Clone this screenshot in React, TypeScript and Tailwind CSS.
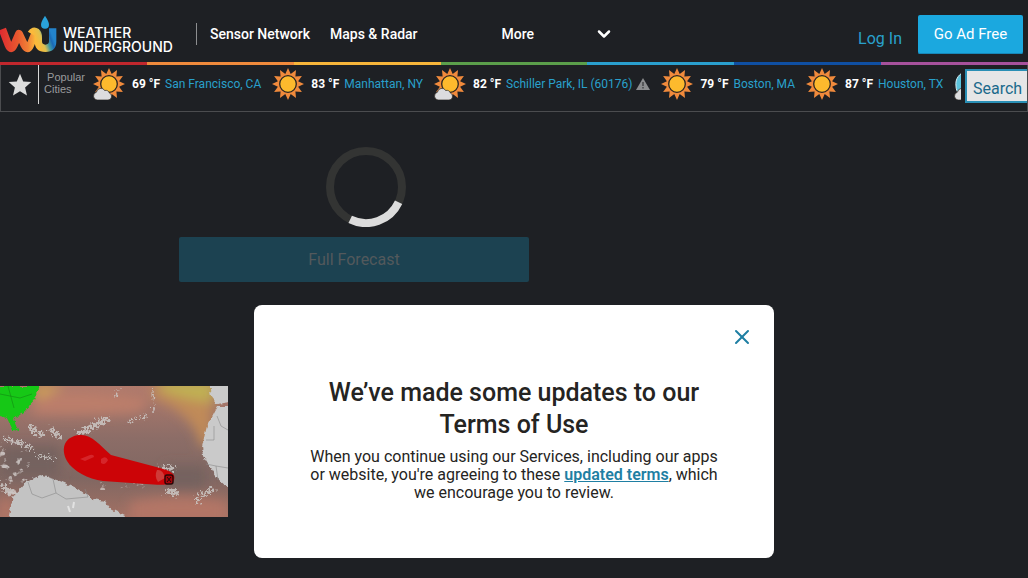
import { ChevronDown, X } from 'lucide-react'

type Sky = 'sunny' | 'partly' | 'night'

interface City {
  name: string
  temp?: number
  sky: Sky
  alert?: boolean
}

const CITIES: City[] = [
  { name: 'San Francisco, CA', temp: 69, sky: 'partly' },
  { name: 'Manhattan, NY', temp: 83, sky: 'sunny' },
  { name: 'Schiller Park, IL (60176)', temp: 82, sky: 'partly', alert: true },
  { name: 'Boston, MA', temp: 79, sky: 'sunny' },
  { name: 'Houston, TX', temp: 87, sky: 'sunny' },
]

const STRIPES = [
  'bg-[#c1272d]',
  'bg-[#f08a3c]',
  'bg-[#f7b53a]',
  'bg-[#5b9f4b]',
  'bg-[#2a9fce]',
  'bg-[#0f4fa3]',
  'bg-[#a6519c]',
]

// 12 rays around the centre of a 32x32 box
const RAYS = Array.from({ length: 24 }, (_, i) => {
  const angle = (i * Math.PI) / 12 - Math.PI / 2
  const radius = i % 2 === 0 ? 16 : 10.5
  return `${(16 + radius * Math.cos(angle)).toFixed(1)},${(16 + radius * Math.sin(angle)).toFixed(1)}`
}).join(' ')

function SkyIcon({ sky }: { sky: Sky }) {
  return (
    <svg viewBox="0 0 32 32" className="w-8 h-8 flex-shrink-0" aria-hidden="true">
      {sky === 'night' ? (
        <path d="M13 3C5 5 1 11 2 18c0 6 4 10 9 12z" fill="#5cc3dc" stroke="#d8eef4" strokeWidth="1" />
      ) : (
        <>
          <polygon points={RAYS} fill="#f08a3c" />
          <circle cx="16" cy="16" r="8.3" fill="#fdba2d" stroke="#2c2620" strokeWidth="1.3" />
        </>
      )}
      {sky !== 'sunny' && (
        <path
          d="M4 32a4 4 0 0 1-.6-7.8 4.6 4.6 0 0 1 8.4-1.7 3.6 3.6 0 0 1 4.6 2.6A3.6 3.6 0 0 1 15 32z"
          fill="#dcdcde"
          stroke="#2c2620"
          strokeWidth="0.7"
        />
      )}
    </svg>
  )
}

function Logo() {
  return (
    <a href="#" aria-label="Weather Underground" className="flex items-end gap-[5px] text-white">
      <svg viewBox="0 42 174 117" className="w-[58px] h-[39px]" aria-hidden="true">
        <defs>
          <linearGradient id="w" gradientUnits="userSpaceOnUse" x1="0" y1="0" x2="105" y2="0">
            <stop offset="0" stopColor="#dd2a30" />
            <stop offset="0.5" stopColor="#e9582f" />
            <stop offset="0.8" stopColor="#f08036" />
            <stop offset="1" stopColor="#fbb43a" />
          </linearGradient>
          <linearGradient id="u" gradientUnits="userSpaceOnUse" x1="112" y1="130" x2="160" y2="112">
            <stop offset="0" stopColor="#fbb93a" />
            <stop offset="0.35" stopColor="#e0c04c" />
            <stop offset="0.62" stopColor="#3f9aa8" />
            <stop offset="0.85" stopColor="#1b69b5" />
            <stop offset="1" stopColor="#2383cc" />
          </linearGradient>
        </defs>
        <path
          d="M7 84 L25 132 Q33 152 42 132 L57 98 L73 132 Q83 152 91 132 L105 97"
          fill="none"
          stroke="url(#w)"
          strokeWidth="23"
          strokeLinejoin="round"
        />
        <path
          d="M93 98 Q100 86 110 93 Q115 97 115 108 V121 Q115 142 136 142 Q158 142 158 121 V82"
          fill="none"
          stroke="url(#u)"
          strokeWidth="22"
        />
        <path d="M135 44 Q147 62 147 71 A12 12 0 0 1 123 71 Q123 62 135 44z" fill="#2aa3dc" />
      </svg>
      <span className="text-sm leading-[14px] font-medium font-[Inter,sans-serif]">
        WEATHER
        <br />
        UNDERGROUND
      </span>
    </a>
  )
}

function Header() {
  return (
    <header className="flex items-center h-[62px] whitespace-nowrap">
      <div className="w-[196px] pt-1.5">
        <Logo />
      </div>
      <nav className="flex items-center text-sm font-medium text-white pt-1.5">
        <span className="w-px h-[22px] mr-[13px] bg-[#8d8e90]" />
        <a href="#" className="mr-5">Sensor Network</a>
        <a href="#" className="mr-[84px]">Maps &amp; Radar</a>
        <button className="flex items-center gap-[60px]">
          More
          <ChevronDown className="w-5 h-5" strokeWidth={3} />
        </button>
      </nav>
      <div className="flex items-center gap-4 ml-auto mr-[5px]">
        <a href="#" className="text-base text-[#29a0cc] pt-4">Log In</a>
        <button className="h-[39px] w-[105px] mt-1.5 rounded-[2px] bg-[#1ba8df] text-[15px] text-white shadow-[inset_0_-1px_0_#1787b8]">
          Go Ad Free
        </button>
      </div>
    </header>
  )
}

function CityBar() {
  return (
    <div className="flex h-[47px] border border-t-0 border-[#4b4c4f] overflow-hidden whitespace-nowrap">
      <button aria-label="Favorites" className="w-[38px] h-[39px] flex-shrink-0 flex items-center justify-center border-r border-[#d8d8d8]">
        <svg viewBox="0 0 24 24" className="w-6 h-6" fill="#dcdcdc" aria-hidden="true">
          <path d="M12 .8l3.2 7.6 8.1.7-6.2 5.4 1.9 8-7-4.3-7 4.3 1.9-8L.7 9.1l8.1-.7z" />
        </svg>
      </button>
      <p className="w-[54px] flex-shrink-0 pt-1.5 pl-[5px] text-[11px] leading-3 text-[#9a9b9d] font-['Liberation_Sans',Arial,sans-serif] whitespace-pre">
        {' Popular\nCities'}
      </p>
      <ul className="flex flex-1 min-w-0 h-[38px] items-center gap-[11px] overflow-hidden text-xs">
        {CITIES.map((city) => (
          <li key={city.name} className="flex items-center flex-shrink-0">
            <SkyIcon sky={city.sky} />
            <span className="ml-[7px] mr-[5px] font-bold text-white">{city.temp} °F</span>
            <a href="#" className="text-[#29a0cc]">{city.name}</a>
            {city.alert && (
              <svg viewBox="0 0 14 12" className="w-3.5 h-3 ml-1" aria-hidden="true">
                <path d="M7 0l7 12H0z" fill="#8b8c8e" />
                <path d="M7 4v4M7 9v1.5" stroke="#3a3b3e" strokeWidth="1.3" />
              </svg>
            )}
          </li>
        ))}
        <li className="flex-shrink-0">
          <SkyIcon sky="night" />
        </li>
      </ul>
      <div className="w-[66px] flex-shrink-0 pt-1 pl-1 overflow-hidden">
        <input
          type="search"
          aria-label="Search locations"
          placeholder="Search Locations"
          className="w-60 h-[34px] pt-1 px-1.5 border-2 border-[#2a8fb5] bg-[#e6e6e7] text-base text-[#1b6a8c] placeholder:text-[#1b6a8c]"
        />
      </div>
    </div>
  )
}

function StormMap() {
  return (
    <svg viewBox="0 0 228 131" className="w-[228px] h-[131px]" role="img" aria-label="Tropical storm forecast map">
      <defs>
        <linearGradient id="sea" x1="0" y1="0" x2="0" y2="1">
          <stop offset="0" stopColor="#b07a6c" />
          <stop offset="0.4" stopColor="#8c6d67" />
          <stop offset="0.7" stopColor="#806762" />
          <stop offset="1" stopColor="#a27063" />
        </linearGradient>
        <filter id="soft" x="-30%" y="-30%" width="160%" height="160%">
          <feGaussianBlur stdDeviation="6" />
        </filter>
        <filter id="clouds" x="0" y="0" width="100%" height="100%">
          <feTurbulence type="fractalNoise" baseFrequency="0.12 0.16" numOctaves="4" seed="4" />
          <feColorMatrix values="0 0 0 0 0.78  0 0 0 0 0.76  0 0 0 0 0.75  0 6 0 0 -3.6" />
        </filter>
        <filter id="rough" x="-10%" y="-10%" width="120%" height="120%">
          <feTurbulence type="fractalNoise" baseFrequency="0.2" numOctaves="3" result="n" />
          <feDisplacementMap in="SourceGraphic" in2="n" scale="5" xChannelSelector="R" yChannelSelector="G" />
        </filter>
        <filter id="wisps" x="-10%" y="-10%" width="120%" height="120%">
          <feTurbulence type="fractalNoise" baseFrequency="0.35" numOctaves="3" seed="9" result="n" />
          <feDisplacementMap in="SourceGraphic" in2="n" scale="14" xChannelSelector="R" yChannelSelector="G" />
        </filter>
        <clipPath id="frame">
          <path d="M0 0h228v131H0z" />
        </clipPath>
      </defs>
      <g clipPath="url(#frame)">
        <path d="M0 0h228v131H0z" fill="url(#sea)" />
        <g filter="url(#soft)">
          <path d="M40 8 Q90 2 150 12 L140 26 Q90 30 30 28z" fill="#bc7e6b" />
          <path d="M150 0h62v60h-12Q196 30 155 12z" fill="#c08a58" />
          <path d="M160 -6h54v22Q190 16 160 4z" fill="#c0b052" />
          <path d="M35 0h30L36 14z" fill="#d0a552" />
          <path d="M130 116q50-10 98 0v20h-98zM0 112h12v24H0z" fill="#b37666" />
          <path d="M0 60h60v30H0zM165 80h40v22h-40z" fill="#75625f" />
        </g>
        <svg x="0" y="54" width="30" height="60" opacity="0.7">
          <rect width="30" height="60" filter="url(#clouds)" />
        </svg>
        <svg x="100" y="90" width="50" height="14" opacity="0.6">
          <rect width="50" height="14" filter="url(#clouds)" />
        </svg>
        <g filter="url(#wisps)" fill="none" stroke="#cbc7c4" strokeLinecap="round" opacity="0.85">
          <path d="M31 42l10 6M51 44l8 5M2 100l10 8" strokeWidth="5" />
          <path d="M4 53l14 3 14 6M38 70l14 2" strokeWidth="2.5" />
          <path d="M80 47l14-7 12-7" strokeWidth="5" />
          <path d="M153 5l1 20M128 36l18-6M115 12l3-8" strokeWidth="1.5" />
          <path d="M162 83l10-1M168 105l8 2" strokeWidth="5" />
          <path d="M196 116l6-8 12-4" strokeWidth="3" />
        </g>
        <g filter="url(#rough)">
          <path d="M0 0h39l-5 14-10 12-10 7 4 12-5-1-6-12-7-2z" fill="#14c814" />
          <path d="M209 -3h22v19l-14 2-6-8zM217 21h14v84l-16-15-12-20-1-10 5-20z" fill="#cacaca" />
          <path d="M8 134l5-23 12-14 15-8 20 6 18 8 15 10 12 2 6 8 22 11z" fill="#c3c3c3" />
        </g>
        <g fill="none" strokeWidth="0.6">
          <path d="M0 8l20 4M8 0l6 22M20 12l12-4" stroke="#128a12" />
          <path
            d="M28 96l4 12 10 4M42 112l14-5 10 6 22-2M56 107l-3-14M88 111l-3-8M206 54h8v-14M217 30l4 10 7 4M206 78l10 2 2 14M216 80l12 2"
            stroke="#8a8a8a"
          />
          <path d="M68 120l2 6M74 116l-1 6" stroke="#e2e2e2" strokeWidth="2" />
        </g>
        <path
          d="M80 49C91 48 100 59 111 69L160 82C171 85 176 88 174 94C172 100 160 99 146 98L103 95C88 93 73 85 67 75C60 62 65 50 80 49z"
          fill="#cc0407"
        />
        <path d="M80 73l10-4q4-1 4 2l-9 4zM101 73q5-4 7 1q-3 6-7 3z" fill="#d6252a" />
        <path d="M157 84q6-1 8 8l-7 4q-4-6-1-12z" fill="#cf3a38" />
        <rect x="165" y="89" width="8" height="9" rx="2" fill="#a8040a" stroke="#2b0506" strokeWidth="1.4" />
        <path d="M167 91l4 5M171 91l-4 5" stroke="#2b0506" strokeWidth="1" />
      </g>
    </svg>
  )
}

function TermsDialog() {
  return (
    <div
      role="dialog"
      aria-labelledby="terms-title"
      className="fixed inset-x-0 bottom-5 mx-auto w-[520px] max-w-full px-12 pt-[72px] pb-14 rounded-lg bg-white text-center text-[#252422]"
    >
      <button aria-label="Close" className="absolute top-5 right-5 text-[#1f7fa3]">
        <X className="w-6 h-6" strokeWidth={2} />
      </button>
      <h2 id="terms-title" className="px-5 text-[25px] leading-8 font-medium">
        We’ve made some updates to our Terms of Use
      </h2>
      <p className="mt-[7px] text-base leading-[18px]">
        When you continue using our Services, including our apps or website, you're agreeing to these{' '}
        <a href="#" className="font-semibold underline text-[#1f7fa3]">updated terms</a>, which we encourage you to
        review.
      </p>
    </div>
  )
}

export default function App() {
  return (
    <div className="min-h-screen overflow-hidden bg-[#1e2024] font-[Roboto,sans-serif]">
      <Header />
      <div className="flex h-[3px]">
        {STRIPES.map((color) => (
          <span key={color} className={`flex-1 ${color}`} />
        ))}
      </div>
      <CityBar />
      <main>
        <section className="flex flex-col items-center w-[708px] max-w-full pt-[35px]">
          <svg viewBox="0 0 80 80" className="w-20 h-20 ml-6" role="img" aria-label="Loading">
            <circle cx="40" cy="40" r="36" fill="none" stroke="#333433" strokeWidth="8" />
            <path d="M72.6 55.2A36 36 0 0 1 24.2 72.4" fill="none" stroke="#dcdcdc" strokeWidth="8" />
          </svg>
          <button disabled className="w-[350px] h-[45px] mt-2.5 rounded-[2px] bg-[#1c4251] text-base text-[#53595c]">
            Full Forecast
          </button>
        </section>
        <section className="mt-[104px]">
          <StormMap />
        </section>
      </main>
      <TermsDialog />
    </div>
  )
}
